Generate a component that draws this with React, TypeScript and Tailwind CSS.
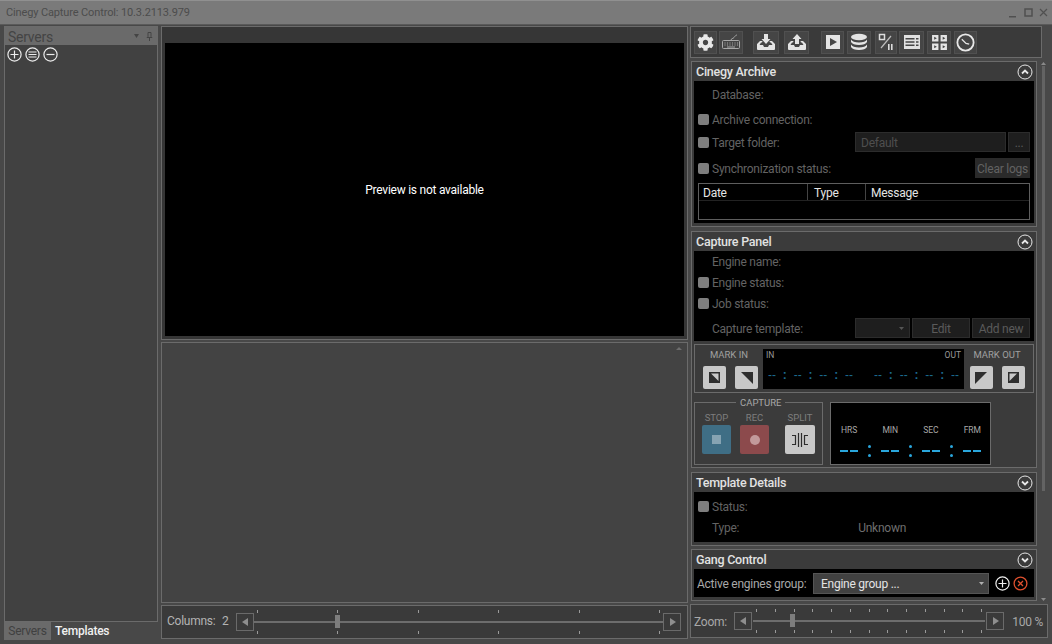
import type { ReactNode } from "react";
import { FaCog } from "react-icons/fa";

const tickRow = (n: number) => Array.from({ length: n }, (_, i) => i);

function TrayIcon({ up }: { up?: boolean }) {
  return (
    <svg width="20" height="18" viewBox="0 0 20 18" fill="#e4e4e4">
      <path d="M1 11l3-3h2.500l-0.500 1.500H5L3.500 12H7l1 2h4l1-2h3.500L15 9.500h-1L13.500 8H16l3 3v5a1 1 0 0 1-1 1H2a1 1 0 0 1-1-1z" />
      {up ? (
        <path d="M10 1l4.500 5H12v5H8V6H5.500z" />
      ) : (
        <path d="M8 1h4v5h2.500L10 11 5.500 6H8z" />
      )}
    </svg>
  );
}

function ToolIcon({ name }: { name: string }) {
  if (name === "gear") return <FaCog className="text-[#e8e8e8] text-[17px]" />;
  if (name === "keyboard")
    return (
      <svg width="20" height="18" viewBox="0 0 20 18" fill="none" stroke="#a8a8a8" strokeWidth="1">
        <rect x="1.500" y="7.500" width="17" height="8" rx="1" />
        <path d="M3.500 10h1M6 10h1M8.500 10h1M11 10h1M13.500 10h1M16 10h1M3.500 12h1M6 12h1M8.500 12h1M11 12h1M13.500 12h1M16 12h1M6 14h8" />
        <path d="M10 7.500C10 5 12 6 13 4.500S15 2 16 2" />
      </svg>
    );
  if (name === "download") return <TrayIcon />;
  if (name === "upload") return <TrayIcon up />;
  if (name === "play")
    return (
      <svg width="16" height="16" viewBox="0 0 16 16">
        <path fillRule="evenodd" fill="#e4e4e4" d="M1 1h14v14H1zM5 4v8l7-4z" />
      </svg>
    );
  if (name === "db")
    return (
      <svg width="18" height="18" viewBox="0 0 18 18" fill="#e4e4e4">
        <ellipse cx="9" cy="4" rx="8" ry="3.200" />
        <path d="M1 6.500C2 8.500 5 9.500 9 9.500s7-1 8-3v2.500c-1 2-4 3-8 3s-7-1-8-3z" />
        <path d="M1 11.500c1 2 4 3 8 3s7-1 8-3V14c-1 2-4 3-8 3s-7-1-8-3z" />
      </svg>
    );
  if (name === "percent")
    return (
      <svg width="16" height="18" viewBox="0 0 16 18" fill="none">
        <rect x="1.500" y="1.500" width="5" height="5" stroke="#dcdcdc" strokeWidth="1.500" />
        <path d="M3 15L13 3" stroke="#bdbdbd" strokeWidth="1.200" />
        <path d="M10 11h1.600v6H10zM13 11h1.600v6H13z" fill="#dcdcdc" />
      </svg>
    );
  if (name === "list")
    return (
      <svg width="16" height="14" viewBox="0 0 16 14">
        <path
          fillRule="evenodd"
          fill="#e0e0e0"
          d="M0 0h16v14H0zM1.500 3v1.500h9V3zM12 3v1.500h2.500V3zM1.500 6.250v1.500h9v-1.500zM12 6.250v1.500h2.500v-1.500zM1.500 9.500V11h9V9.500zM12 9.500V11h2.500V9.500z"
        />
      </svg>
    );
  if (name === "grid")
    return (
      <svg width="17" height="17" viewBox="0 0 16 16">
        <path
          fillRule="evenodd"
          fill="#e4e4e4"
          d="M1 1h6v6H1zM3 2.500v3l2.500-1.500zM9 1h6v6H9zM11 2.500v3l2.500-1.500zM1 9h6v6H1zM3 10.500v3l2.500-1.500zM9 9h6v6H9zM11 10.500v3l2.500-1.500z"
        />
      </svg>
    );
  return (
    <svg width="19" height="19" viewBox="0 0 18 18" fill="none" stroke="#e8e8e8">
      <circle cx="9" cy="9" r="7.700" strokeWidth="1.700" />
      <path d="M5.500 6L9.500 9.800l3 .7" strokeWidth="1.200" />
    </svg>
  );
}

function ToolButton({ name, w, ml = 0 }: { name: string; w: string; ml?: number }) {
  return (
    <div
      className={`h-[23px] ${w} flex items-center justify-center bg-[#454545] border border-[#505050]`}
      style={ml ? { marginLeft: ml } : undefined}
    >
      <ToolIcon name={name} />
    </div>
  );
}

function Panel({ title, open, h, children }: { title: string; open?: boolean; h: string; children: ReactNode }) {
  return (
    <section className={`${h} flex flex-col border border-[#6b6b6b] bg-[#3b3b3b] px-[2px] pb-[3px]`}>
      <header className="h-[19px] shrink-0 flex items-center justify-between pl-[2px] pr-[1px]">
        <span className="pt-px text-[12.500px] font-medium text-[#e2e2e2]">{title}</span>
        <svg width="16" height="16" viewBox="0 0 16 16" fill="none" stroke="#e8e8e8">
          <circle cx="8" cy="8" r="7" strokeWidth="1" />
          <path d={open ? "M5 9.500L8 6.500l3 3" : "M5 6.500L8 9.500l3-3"} strokeWidth="1.800" />
        </svg>
      </header>
      {children}
    </section>
  );
}

function Row({ label, h, check, children }: { label: string; h: string; check?: boolean; children?: ReactNode }) {
  return (
    <div className={`${h} flex items-center pl-[4px]`}>
      <span className={`w-[11px] h-[11px] rounded-[2px] mr-[3px] shrink-0 ${check ? "bg-[#7e7e7e]" : ""}`} />
      <span className="pt-px text-[#636363]">{label}</span>
      {children}
    </div>
  );
}

function DimBox({ w, children, ml }: { w: string; children?: ReactNode; ml?: string }) {
  return (
    <div className={`${w} ${ml ?? ""} h-[20px] pt-px flex items-center justify-center bg-[#1e1e1e] border border-[#2c2c2c] text-[#5a5a5a]`}>
      {children}
    </div>
  );
}

function MarkButton({ path }: { path: string }) {
  return (
    <div className="w-[23px] h-[23px] flex items-center justify-center bg-[#c8c8c8] rounded-[2px]">
      <svg width="15" height="15" viewBox="0 0 15 15">
        <path d={path} fill="#2e2e2e" fillRule="evenodd" />
      </svg>
    </div>
  );
}

function SmallCode() {
  return (
    <div className="flex items-center justify-between w-[85px] text-[12px] leading-none text-[#1c6b8f] font-['Liberation_Sans',sans-serif]">
      <span>--</span>
      <span className="font-bold">:</span>
      <span>--</span>
      <span className="font-bold">:</span>
      <span>--</span>
      <span className="font-bold">:</span>
      <span>--</span>
    </div>
  );
}

function BigDash() {
  return (
    <div className="flex gap-[2px] w-[18px]">
      <span className="h-[2px] w-[8px] bg-[#2aa6dc]" />
      <span className="h-[2px] w-[8px] bg-[#2aa6dc]" />
    </div>
  );
}

function BigColon() {
  return (
    <div className="flex flex-col gap-[6px] w-[3px]">
      <span className="w-[3px] h-[3px] rounded-full bg-[#2aa6dc]" />
      <span className="w-[3px] h-[3px] rounded-full bg-[#2aa6dc]" />
    </div>
  );
}

function SliderArrow({ left }: { left?: boolean }) {
  return (
    <div className="w-[18px] h-[18px] flex items-center justify-center border border-[#6a6a6a] shrink-0">
      <svg width="7" height="8" viewBox="0 0 7 8">
        <path d={left ? "M6 0v8L0 4z" : "M1 0v8l6-4z"} fill="#8e8e8e" />
      </svg>
    </div>
  );
}

function Slider({ ticks, thumb, w }: { ticks: number; thumb: string; w: string }) {
  const line = (
    <div className="flex justify-between px-[3px] h-[3px]">
      {tickRow(ticks).map((i) => (
        <span key={i} className="w-px h-[3px] bg-[#9a9a9a]" />
      ))}
    </div>
  );
  return (
    <div className={`${w} relative h-[24px] flex flex-col justify-between`}>
      {line}
      <div className="h-[2px] bg-[#6d6d6d]" />
      {line}
      <span className={`absolute top-[5px] ${thumb} w-[5px] h-[13px] bg-[#7d7d7d]`} />
    </div>
  );
}

export default function App() {
  return (
    <div className="w-[1052px] h-[644px] overflow-hidden flex flex-col bg-[#484848] text-[12px] leading-none tracking-[-0.25px] whitespace-nowrap font-['Roboto','Noto_Sans',sans-serif]">
      <div className="h-[25px] shrink-0 flex items-center justify-between pl-[6px] pr-[3px] bg-[#7a7a7a] border-t border-[#909090] border-b-[#5a5a5a] border-b">
        <span className="text-[#4c4c4c] text-[11px] tracking-[-0.13px]">Cinegy Capture Control: 10.3.2113.979</span>
        <div className="flex items-center gap-[4px]">
          <svg width="11" height="11" viewBox="0 0 11 11" fill="#505050"><path d="M1 9h7v1.500H1z" /></svg>
          <svg width="11" height="11" viewBox="0 0 11 11" fill="none" stroke="#505050" strokeWidth="1.500"><path d="M2 2h7v7H2z" /></svg>
          <svg width="11" height="11" viewBox="0 0 11 11" fill="none" stroke="#505050" strokeWidth="1.200"><path d="M2 2l7 7M9 2l-7 7" /></svg>
        </div>
      </div>

      <div className="flex-1 flex pt-px pl-[4px] min-h-0">
        {/* servers dock */}
        <aside className="w-[154px] h-[614px] flex flex-col shrink-0">
          <div className="flex-1 flex flex-col border border-[#6b6b6b] bg-[#414141]">
            <div className="h-[18px] flex items-center justify-between pl-[3px] pr-[4px] bg-[#6a6a6a]">
              <span className="pt-[2px] text-[14px] text-[#444444]">Servers</span>
              <div className="flex items-center gap-[7px]">
                <svg width="5" height="4" viewBox="0 0 5 4"><path d="M0 0h5L2.500 4z" fill="#444444" /></svg>
                <svg width="7" height="9" viewBox="0 0 7 9" fill="none" stroke="#444444"><path d="M2 .5h3v4l1 1H1l1-1zM3.500 5.500V9" /></svg>
              </div>
            </div>
            <div className="flex items-center gap-[3px] pl-[2px] pt-[2px]">
              <svg width="15" height="15" viewBox="0 0 15 15" fill="none" stroke="#ececec" strokeWidth="1.200"><circle cx="7.500" cy="7.500" r="6.600" /><path d="M7.500 3.500v8M3.500 7.500h8" /></svg>
              <svg width="15" height="15" viewBox="0 0 15 15" fill="none" stroke="#ececec" strokeWidth="1.200"><circle cx="7.500" cy="7.500" r="6.600" /><path d="M3.500 5h8M3.500 7.500h8M3.500 10h8" /></svg>
              <svg width="15" height="15" viewBox="0 0 15 15" fill="none" stroke="#ececec" strokeWidth="1.200"><circle cx="7.500" cy="7.500" r="6.600" /><path d="M3.500 7.500h8" /></svg>
            </div>
          </div>
          <div className="h-[18px] flex shrink-0">
            <div className="w-[47px] flex items-center justify-center bg-[#6a6a6a] text-[#404040]">Servers</div>
            <div className="flex items-center pl-[4px] text-[#f0f0f0] font-medium">Templates</div>
          </div>
        </aside>

        {/* center */}
        <main className="ml-[3px] w-[527px] shrink-0 flex flex-col">
          <div className="h-[314px] p-[3px] pt-[16px] border border-[#6b6b6b] bg-[#363636]">
            <div className="h-full bg-black flex items-center justify-center text-white">Preview is not available</div>
          </div>
          <div className="mt-[2px] h-[261px] relative border border-[#6b6b6b] bg-[#434343]">
            <svg className="absolute top-[4px] right-[5px]" width="6" height="3" viewBox="0 0 6 3"><path d="M0 3h6L3 0z" fill="#6d6d6d" /></svg>
          </div>
          <div className="mt-[2px] h-[34px] flex items-center pl-[5px] pr-[6px] border border-[#6b6b6b] bg-[#3a3a3a] text-[#b4b4b4]">
            <span className="w-[55px] pb-[2px]">Columns:</span>
            <span className="w-[14px] pb-[2px]">2</span>
            <SliderArrow left />
            <Slider ticks={6} thumb="left-[81px]" w="flex-1" />
            <SliderArrow />
          </div>
        </main>

        {/* right column */}
        <div className="ml-[2px] w-[358px] shrink-0 flex flex-col">
          <div className="h-[32px] w-[352px] flex items-center pl-[3px] gap-[2px] border border-[#6b6b6b] bg-[#3a3a3a]">
            <ToolButton name="gear" w="w-[23px]" />
            <ToolButton name="keyboard" w="w-[24px]" />
            <ToolButton name="download" w="w-[26px]" ml={8} />
            <ToolButton name="upload" w="w-[25px]" ml={3} />
            <ToolButton name="play" w="w-[23px]" ml={10} />
            <ToolButton name="db" w="w-[24px]" ml={1} />
            <ToolButton name="percent" w="w-[22px]" ml={2} />
            <ToolButton name="list" w="w-[25px]" />
            <ToolButton name="grid" w="w-[24px]" ml={1} />
            <ToolButton name="clock" w="w-[23px]" ml={1} />
          </div>

          <div className="mt-[3px] h-[541px] flex min-h-0">
            <div className="w-[346px] ml-px flex flex-col gap-[4px] shrink-0">
              <Panel title="Cinegy Archive" open h="h-[166px]">
                <div className="flex-1 bg-black">
                  <Row label="Database:" h="h-[27px]" />
                  <Row label="Archive connection:" h="h-[22px]" check />
                  <Row label="Target folder:" h="h-[24px]" check>
                    <DimBox w="w-[151px]" ml="ml-auto">
                      <span className="w-full pl-[5px] text-[#4e4e4e]">Default</span>
                    </DimBox>
                    <DimBox w="w-[22px]" ml="ml-[2px] mr-[4px]">...</DimBox>
                  </Row>
                  <Row label="Synchronization status:" h="h-[28px]" check>
                    <div className="ml-auto mr-[4px] w-[55px] h-[20px] pt-px flex items-center justify-center bg-[#2a2a2a] text-[#626262]">Clear logs</div>
                  </Row>
                  <div className="mx-[4px] h-[37px] border border-[#5e5e5e] mt-px">
                    <div className="h-[17px] flex items-center border-b border-[#222222] text-[#e4e4e4]">
                      <span className="w-[109px] pl-[4px] pt-[2px] h-full flex items-center border-r border-[#444444]">Date</span>
                      <span className="w-[58px] pl-[6px] pt-[2px] h-full flex items-center border-r border-[#444444]">Type</span>
                      <span className="pl-[5px] pt-[2px]">Message</span>
                    </div>
                  </div>
                </div>
              </Panel>

              <Panel title="Capture Panel" open h="h-[237px]">
                <div className="h-[90px] shrink-0 bg-black">
                  <Row label="Engine name:" h="h-[20px]" />
                  <Row label="Engine status:" h="h-[22px]" check />
                  <Row label="Job status:" h="h-[20px]" check />
                  <div className="h-[25px] flex items-center pl-[18px] pt-[5px]">
                    <span className="pt-px text-[#636363] w-[143px]">Capture template:</span>
                    <div className="w-[55px] h-[20px] flex items-center justify-end pr-[5px] bg-[#1e1e1e] border border-[#2c2c2c]">
                      <svg width="5" height="3" viewBox="0 0 5 3"><path d="M0 0h5L2.500 3z" fill="#555555" /></svg>
                    </div>
                    <DimBox w="w-[58px]" ml="ml-[2px]">Edit</DimBox>
                    <DimBox w="w-[58px]" ml="ml-[2px]">Add new</DimBox>
                  </div>
                </div>

                <div className="mt-[3px] h-[49px] shrink-0 flex items-center border border-[#6b6b6b] text-[9.500px] tracking-normal text-[#a0a0a0]">
                  <div className="w-[68px] flex flex-col items-center">
                    <span className="pt-px mb-[4px] h-[13px]">MARK IN</span>
                    <div className="flex gap-[9px] pl-[2px]">
                      <MarkButton path="M2 2h11v11H2zM4 3.500h7.500v7.500z" />
                      <MarkButton path="M2 2h12v12z" />
                    </div>
                  </div>
                  <div className="w-[201px] h-[40px] bg-black flex flex-col justify-between px-[3px] pt-[2px] pb-[8px] text-[8.500px] text-[#9a9a9a]">
                    <div className="flex justify-between"><span>IN</span><span>OUT</span></div>
                    <div className="flex justify-between px-[2px]"><SmallCode /><SmallCode /></div>
                  </div>
                  <div className="flex-1 flex flex-col items-center pr-[3px]">
                    <span className="pt-px mb-[4px] h-[13px]">MARK OUT</span>
                    <div className="flex gap-[9px]">
                      <MarkButton path="M1 14V2h12z" />
                      <MarkButton path="M2 2h11v11H2zM3.500 3.500H11L3.500 11z" />
                    </div>
                  </div>
                </div>

                <div className="mt-[9px] flex items-start">
                  <div className="relative w-[129px] h-[63px] border border-[#6b6b6b] flex pl-[7px] pt-[7px] text-[9.500px] tracking-normal text-[#7e7e7e]">
                    <span className="absolute -top-[5px] left-[41px] px-[4px] bg-[#3b3b3b] text-[#a8a8a8]">CAPTURE</span>
                    <div className="w-[38px] flex flex-col items-center pr-[9px]">
                      <span className="h-[15px] flex items-center">STOP</span>
                      <div className="w-[29px] h-[29px] shrink-0 flex items-center justify-center bg-[#3f6e85] rounded-[2px]">
                        <span className="w-[9px] h-[9px] bg-[#86a3b2]" />
                      </div>
                    </div>
                    <div className="w-[38px] flex flex-col items-center pr-[9px]">
                      <span className="h-[15px] flex items-center">REC</span>
                      <div className="w-[29px] h-[29px] shrink-0 flex items-center justify-center bg-[#8c4a4c] rounded-[2px]">
                        <span className="w-[10px] h-[10px] rounded-full bg-[#c29a9b]" />
                      </div>
                    </div>
                    <div className="ml-[7px] w-[30px] flex flex-col items-center">
                      <span className="h-[15px] flex items-center">SPLIT</span>
                      <div className="w-[30px] h-[29px] shrink-0 flex items-center justify-center bg-[#c8c8c8] rounded-[2px]">
                        <svg width="18" height="16" viewBox="0 0 18 16" fill="none" stroke="#2c2c2c" strokeWidth="1.200">
                          <path d="M1 3.500h3.500v9H1M17 3.500h-3.500v9H17M7.500 1v14M10.500 1v14" />
                        </svg>
                      </div>
                    </div>
                  </div>
                  <div className="ml-[7px] w-[161px] h-[63px] border border-[#6b6b6b] bg-black flex flex-col items-start pl-[9px] pt-[23px]">
                    <div className="flex w-[141px] justify-between text-[8.500px] tracking-normal text-[#a8a8a8] pl-px">
                      <span>HRS</span>
                      <span>MIN</span>
                      <span>SEC</span>
                      <span>FRM</span>
                    </div>
                    <div className="flex w-[141px] justify-between items-center mt-[10px]">
                      <BigDash />
                      <BigColon />
                      <BigDash />
                      <BigColon />
                      <BigDash />
                      <BigColon />
                      <BigDash />
                    </div>
                  </div>
                </div>
              </Panel>

              <Panel title="Template Details" h="h-[74px]">
                <div className="flex-1 bg-black pt-[3px]">
                  <Row label="Status:" h="h-[22px]" check />
                  <Row label="Type:" h="h-[20px]">
                    <span className="pt-px ml-[119px] text-[#6e6e6e]">Unknown</span>
                  </Row>
                </div>
              </Panel>

              <div className="-mt-px">
                <Panel title="Gang Control" h="h-[52px]">
                  <div className="flex-1 bg-black flex items-center pl-[3px] text-[#a8a8a8]">
                    <span className="pt-px w-[116px]">Active engines group:</span>
                    <div className="w-[176px] h-[21px] flex items-center justify-between pl-[7px] pr-[4px] bg-[#414141] border border-[#555555] text-[#e4e4e4]">
                      <span className="pt-px">Engine group ...</span>
                      <svg width="5" height="3" viewBox="0 0 5 3"><path d="M0 0h5L2.500 3z" fill="#b0b0b0" /></svg>
                    </div>
                    <svg className="ml-[6px]" width="15" height="15" viewBox="0 0 15 15" fill="none" stroke="#f0f0f0" strokeWidth="1.200"><circle cx="7.500" cy="7.500" r="6.600" /><path d="M7.500 3.500v8M3.500 7.500h8" /></svg>
                    <svg className="ml-[3px]" width="15" height="15" viewBox="0 0 15 15" fill="none" stroke="#e0502e" strokeWidth="1.300"><circle cx="7.500" cy="7.500" r="6.400" /><path d="M5 5l5 5M10 5l-5 5" /></svg>
                  </div>
                </Panel>
              </div>
            </div>

            {/* scrollbar */}
            <div className="w-[10px] ml-px flex flex-col items-center justify-between py-px">
              <svg width="5" height="3" viewBox="0 0 5 3"><path d="M0 3h5L2.500 0z" fill="#8a8a8a" /></svg>
              <div className="w-[3px] mt-px flex-1 flex flex-col">
                <div className="h-[425px] bg-[#636363]" />
              </div>
              <svg width="5" height="3" viewBox="0 0 5 3"><path d="M0 0h5L2.500 3z" fill="#8a8a8a" /></svg>
            </div>
          </div>

          <div className="mt-[2px] h-[34px] flex items-center pl-[3px] pr-[4px] border border-[#6b6b6b] bg-[#3a3a3a] text-[#a8a8a8]">
            <span className="pt-px w-[40px]">Zoom:</span>
            <SliderArrow left />
            <Slider ticks={13} thumb="left-[37px]" w="w-[232px] mx-px" />
            <SliderArrow />
            <span className="pt-px ml-auto">100 %</span>
          </div>
        </div>
      </div>
    </div>
  );
}
